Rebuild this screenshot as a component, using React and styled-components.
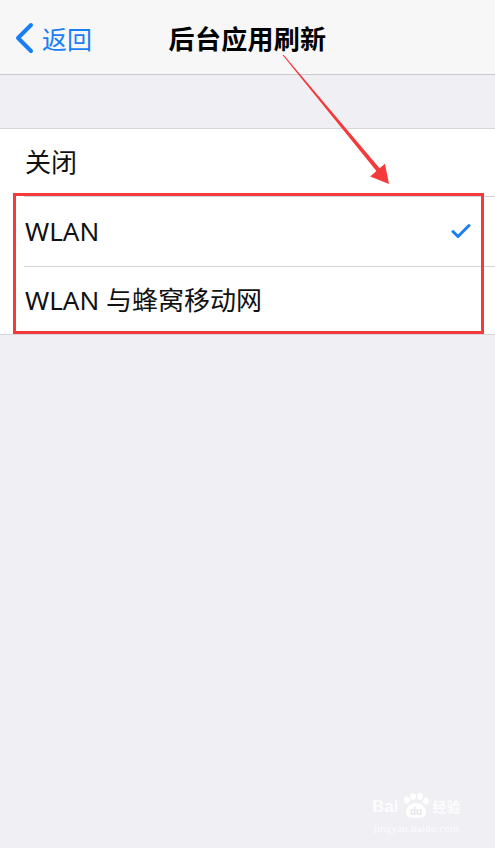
import React from "react";
import styled, { createGlobalStyle } from "styled-components";

const Global = createGlobalStyle`
  html, body { margin: 0; padding: 0; }
  body {
    background: #efeff4;
    font-family: "Noto Sans", "Noto Sans CJK SC", sans-serif;
  }
  #root { min-height: 848px; }
`;

const Page = styled.div`
  position: relative;
  width: 495px;
  height: 848px;
  overflow: hidden;
  background: #efeff4;
  display: flex;
  flex-direction: column;
`;

const NavBar = styled.header`
  height: 74px;
  background: #f7f7f8;
  border-bottom: 1px solid #c9c9cd;
  display: grid;
  grid-template-columns: 1fr auto 1fr;
  align-items: center;
  padding: 0 0 0 14px;
`;

const BackButton = styled.div`
  display: flex;
  align-items: center;
  gap: 8px;
  color: #1a7ef6;
  font-family: "Noto Sans CJK SC", sans-serif;
  font-size: 25px;
  line-height: 1;
  margin-top: 2px;
`;

const Title = styled.h1`
  margin: 0;
  font-family: "Noto Sans CJK SC", sans-serif;
  font-weight: 700;
  font-size: 26px;
  color: #000;
  letter-spacing: 0.3px;
  line-height: 1;
  margin-top: 2px;
  margin-right: 14px;
`;

const Gap = styled.div`
  height: 53px;
`;

const List = styled.ul`
  list-style: none;
  margin: 0;
  padding: 0;
  background: #fff;
  border-top: 1px solid #d6d6da;
  border-bottom: 1px solid #d6d6da;
`;

const Row = styled.li`
  position: relative;
  height: ${(p) => p.$h}px;
  display: flex;
  align-items: center;
  justify-content: space-between;
  padding: 0 24px 0 25px;
  font-family: "Noto Sans", "Noto Sans CJK SC", sans-serif;
  font-size: 26px;
  color: #111;
  &::before {
    content: "";
    display: ${(p) => (p.$sep ? "block" : "none")};
    position: absolute;
    top: 0;
    left: 24px;
    right: 0;
    height: 1px;
    background: #d4d4d8;
  }
`;

const Label = styled.span`
  line-height: 1;
  margin-top: ${(p) => p.$mt || 0}px;
`;

const Highlight = styled.div`
  position: absolute;
  left: 13px;
  top: 193px;
  width: 471px;
  height: 141px;
  box-sizing: border-box;
  border: 3px solid #f53a3c;
  pointer-events: none;
`;

const ArrowSvg = styled.svg`
  position: absolute;
  left: 0;
  top: 0;
  pointer-events: none;
`;

const Watermark = styled.div`
  position: absolute;
  left: 372px;
  top: 793px;
  display: flex;
  flex-direction: column;
  align-items: center;
  color: rgba(255, 255, 255, 0.85);
  pointer-events: none;
`;

const MarkTop = styled.div`
  display: flex;
  align-items: center;
  gap: 2px;
  font-family: "Liberation Sans", sans-serif;
  font-weight: 700;
  font-size: 17px;
  line-height: 1;
`;

const MarkCn = styled.span`
  font-family: "Noto Sans CJK SC", sans-serif;
  font-weight: 700;
  font-size: 14px;
`;

const MarkUrl = styled.div`
  font-family: "Liberation Serif", serif;
  font-size: 11px;
  margin-top: 3px;
  letter-spacing: 0.2px;
`;

function Chevron() {
  return (
    <svg width="20" height="32" viewBox="0 0 20 32">
      <path
        d="M17 3 L4 16 L17 29"
        fill="none"
        stroke="#1a7ef6"
        strokeWidth="4"
        strokeLinecap="round"
        strokeLinejoin="round"
      />
    </svg>
  );
}

function Check() {
  return (
    <svg width="20" height="16" viewBox="0 0 20 16">
      <path
        d="M2 8.5 L7 13.5 L18 2.5"
        fill="none"
        stroke="#1a7ef6"
        strokeWidth="3"
        strokeLinecap="round"
        strokeLinejoin="round"
      />
    </svg>
  );
}

function Paw() {
  return (
    <svg width="30" height="26" viewBox="0 0 30 26">
      <g fill="rgba(255,255,255,0.9)">
        <ellipse cx="7" cy="7" rx="3" ry="3.6" />
        <ellipse cx="13" cy="3.5" rx="3" ry="3.4" />
        <ellipse cx="20" cy="3.5" rx="3" ry="3.4" />
        <ellipse cx="26" cy="8" rx="3" ry="3.6" />
        <path d="M6 20 C6 13 11 10 16 10 C21 10 26 13 26 20 C26 24 22 25 16 25 C10 25 6 24 6 20 Z" />
      </g>
      <text x="16" y="22" textAnchor="middle" fontSize="10" fontWeight="700" fill="#e6e6ec" fontFamily="Liberation Sans, sans-serif">du</text>
    </svg>
  );
}

export default function App() {
  return (
    <Page>
      <Global />
      <NavBar>
        <BackButton>
          <Chevron />
          <span>返回</span>
        </BackButton>
        <Title>后台应用刷新</Title>
        <div />
      </NavBar>
      <Gap />
      <List>
        <Row $h={67}>
          <Label $mt={-2}>关闭</Label>
        </Row>
        <Row $h={70} $sep>
          <Label>WLAN</Label>
          <Check />
        </Row>
        <Row $h={68} $sep>
          <Label>WLAN 与蜂窝移动网</Label>
        </Row>
      </List>
      <Highlight />
      <ArrowSvg width="495" height="848" viewBox="0 0 495 848">
        <polygon
          points="282.5,55 283.8,55 379.6,168.2 385,163.8 389,184 370.2,176.4 376.4,170.9"
          fill="#f53a3c"
        />
      </ArrowSvg>
      <Watermark>
        <MarkTop>
          <span>Bai</span>
          <Paw />
          <MarkCn>经验</MarkCn>
        </MarkTop>
        <MarkUrl>jingyan.baidu.com</MarkUrl>
      </Watermark>
    </Page>
  );
}
